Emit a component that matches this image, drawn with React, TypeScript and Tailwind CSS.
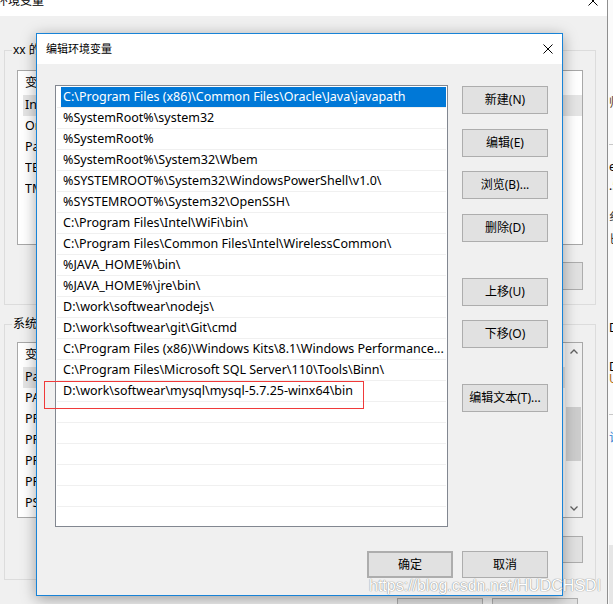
import React from "react";

const paths = [
  "C:\\Program Files (x86)\\Common Files\\Oracle\\Java\\javapath",
  "%SystemRoot%\\system32",
  "%SystemRoot%",
  "%SystemRoot%\\System32\\Wbem",
  "%SYSTEMROOT%\\System32\\WindowsPowerShell\\v1.0\\",
  "%SYSTEMROOT%\\System32\\OpenSSH\\",
  "C:\\Program Files\\Intel\\WiFi\\bin\\",
  "C:\\Program Files\\Common Files\\Intel\\WirelessCommon\\",
  "%JAVA_HOME%\\bin\\",
  "%JAVA_HOME%\\jre\\bin\\",
  "D:\\work\\softwear\\nodejs\\",
  "D:\\work\\softwear\\git\\Git\\cmd",
  "C:\\Program Files (x86)\\Windows Kits\\8.1\\Windows Performance...",
  "C:\\Program Files\\Microsoft SQL Server\\110\\Tools\\Binn\\",
  "D:\\work\\softwear\\mysql\\mysql-5.7.25-winx64\\bin",
  "",
  "",
  "",
  "",
  "",
  "",
];

const userVars = [
  ["IntelliJ IDEA", "C:\\Program Files\\JetBrains\\bin;"],
  ["OneDrive", "C:\\Users\\xx\\OneDrive"],
  ["Path", "C:\\Users\\xx\\AppData\\Local\\Microsoft\\WindowsApps;"],
  ["TEMP", "%USERPROFILE%\\AppData\\Local\\Temp"],
  ["TMP", "%USERPROFILE%\\AppData\\Local\\Temp"],
];

const sysVars = [
  ["Path", "C:\\Program Files (x86)\\Common Files\\Oracle\\Java\\javapath;"],
  ["PATHEXT", ".COM;.EXE;.BAT;.CMD;.VBS;.VBE;.JS;.JSE;.WSF;.WSH;.MSC"],
  ["PROCESSOR_ARCHITECTURE", "AMD64"],
  ["PROCESSOR_IDENTIFIER", "Intel64 Family 6 Model 142 Stepping 10"],
  ["PROCESSOR_LEVEL", "6"],
  ["PROCESSOR_REVISION", "8e0a"],
  ["PSModulePath", "%ProgramFiles%\\WindowsPowerShell\\Modules;"],
];

function CloseX({ className = "" }: { className?: string }) {
  return (
    <svg width="10" height="10" viewBox="0 0 10 10" className={className}>
      <path d="M0.5 0.5 L9.5 9.5 M9.5 0.5 L0.5 9.5" stroke="#000" strokeWidth="1" fill="none" />
    </svg>
  );
}

function Btn({ children, className = "" }: { children: React.ReactNode; className?: string }) {
  return (
    <div
      className={`w-[86px] shrink-0 bg-[#e1e1e1] border border-[#adadad] flex items-center justify-center text-[12px] text-black ${className}`}
    >
      {children}
    </div>
  );
}

function BgList({ rows, headerH, scroll }: { rows: string[][]; headerH: string; scroll?: boolean }) {
  return (
    <div className="flex bg-white border border-[#a8a8a8] h-full overflow-hidden">
      <div className="flex-1 flex flex-col text-[12.5px] text-black">
        <div className={`${headerH} flex items-center pl-[7px] shrink-0`}>
          <span className="w-[180px]">变量</span>
          <span>值</span>
        </div>
        {rows.map((r, i) => (
          <div key={i} className="h-[21px] shrink-0 flex items-center">
            <div className={`ml-[5px] h-full flex items-center pl-[2px] flex-1 ${i === 0 ? "bg-[#e5e5e5]" : ""}`}>
              <span className="w-[173px] whitespace-nowrap overflow-hidden">{r[0]}</span>
              <span className="whitespace-nowrap overflow-hidden">{r[1]}</span>
            </div>
          </div>
        ))}
      </div>
      {scroll && (
        <div className="w-[17px] shrink-0 bg-[#f0f0f0] flex flex-col">
          <div className="h-[17px] flex items-center justify-center">
            <svg width="8" height="5" viewBox="0 0 8 5">
              <path d="M0.5 4.5 L4 1 L7.5 4.5" stroke="#606060" strokeWidth="1.3" fill="none" />
            </svg>
          </div>
          <div className="flex-1 flex flex-col">
            <div className="mt-[47px] mx-[1px] h-[54px] bg-[#cdcdcd]" />
          </div>
          <div className="h-[17px] flex items-center justify-center">
            <svg width="8" height="5" viewBox="0 0 8 5">
              <path d="M0.5 0.5 L4 4 L7.5 0.5" stroke="#606060" strokeWidth="1.3" fill="none" />
            </svg>
          </div>
        </div>
      )}
    </div>
  );
}

export default function App() {
  return (
    <div className="w-[613px] h-[604px] overflow-hidden relative bg-[#f0f0f0] flex font-['Noto_Sans','Noto_Sans_CJK_SC',sans-serif]">
      {/* background window: 环境变量 */}
      <div className="w-[608px] shrink-0 flex flex-col border-r border-[#8f8f8f]">
        <div className="h-[30px] -mt-[14px] shrink-0 bg-white flex items-center justify-between">
          <span className="-ml-[4px] text-[12px] text-black">环境变量</span>
          <CloseX className="mr-[9px]" />
        </div>
        <div className="flex flex-col pl-[4px]">
          <fieldset className="mt-[26px] w-[592px] border border-[#dcdcdc] px-[12px] pb-[14px]">
            <legend className="-ml-[5px] px-[1px] text-[12px] leading-[16px] text-black">xx 的用户变量(U)</legend>
            <div className="mt-[12px] h-[175px]">
              <BgList rows={userVars} headerH="h-[24px]" />
            </div>
            <div className="mt-[17px] h-[28px] flex justify-end gap-[10px]">
              <Btn>新建(N)...</Btn>
              <Btn>编辑(E)...</Btn>
              <Btn>删除(D)</Btn>
            </div>
          </fieldset>
          <fieldset className="mt-[11px] w-[592px] border border-[#dcdcdc] px-[12px] pb-[16px]">
            <legend className="-ml-[5px] px-[1px] text-[12px] leading-[16px] text-black">系统变量(S)</legend>
            <div className="mt-[10px] h-[176px]">
              <BgList rows={sysVars} headerH="h-[24px]" scroll />
            </div>
            <div className="mt-[18px] h-[27px] flex justify-end gap-[10px]">
              <Btn>新建(W)...</Btn>
              <Btn>编辑(I)...</Btn>
              <Btn>删除(L)</Btn>
            </div>
          </fieldset>
          <div className="mt-[18px] h-[27px] flex justify-end gap-[9px] pr-[29px]">
            <Btn>确定</Btn>
            <Btn>取消</Btn>
          </div>
        </div>
      </div>

      {/* sliver of another window at far right */}
      <div className="flex-1 bg-[#fbfbfb] flex flex-col overflow-hidden text-[12px] leading-[14px] pl-[1px]">
        <span className="mt-[96px] text-[#5a3a1a] whitespace-nowrap">帅</span>
        <div className="mt-[34px] h-px bg-[#c8c8c8]" />
        <span className="mt-[15px] text-black">e</span>
        <span className="mt-[5px] text-black">.5</span>
        <span className="mt-[17px] text-[#333]">纟</span>
        <span className="mt-[9px] text-[#333]">匕</span>
        <span className="mt-[74px] text-black">D</span>
        <span className="mt-[25px] text-black">D</span>
        <span className="mt-[-2px] text-[#b06a10]">U</span>
        <div className="mt-[28px] h-px bg-[#c8c8c8]" />
        <span className="mt-[16px] text-[#2a7ad2]">许</span>
        <div className="mt-[100px] flex-1 bg-[#e6e6e6]" />
      </div>

      {/* foreground dialog: 编辑环境变量 */}
      <div className="absolute left-[36px] top-[33px] w-[527px] h-[563px] border border-[#1883d7] bg-[#f0f0f0] flex flex-col shadow-[0_3px_14px_rgba(0,0,0,0.35)]">
        <div className="h-[30px] shrink-0 bg-white flex items-center justify-between pl-[9px] pr-[9px]">
          <span className="text-[11px] text-black">编辑环境变量</span>
          <CloseX />
        </div>
        <div className="flex-1 flex flex-col pt-[21px] pl-[18px] pr-[14px] pb-[17px]">
          <div className="flex gap-[14px]">
            <div className="w-[393px] h-[442px] shrink-0 border border-[#828790] bg-white overflow-hidden pt-[1px] px-[1px] flex flex-col">
              {paths.map((p, i) => (
                <div key={i} className="h-[21px] shrink-0 border-b border-[#f0f0f0] flex">
                  <div
                    className={`ml-[4px] flex-1 flex items-center pl-[2px] text-[12.5px] whitespace-nowrap overflow-hidden ${
                      i === 0 ? "bg-[#0078d7] text-white" : "text-black"
                    }`}
                  >
                    {p}
                  </div>
                </div>
              ))}
            </div>
            <div className="flex flex-col pt-[1px]">
              <Btn className="h-[28px]">新建(N)</Btn>
              <Btn className="h-[28px] mt-[15px]">编辑(E)</Btn>
              <Btn className="h-[28px] mt-[14px]">浏览(B)...</Btn>
              <Btn className="h-[28px] mt-[15px]">删除(D)</Btn>
              <Btn className="h-[28px] mt-[36px]">上移(U)</Btn>
              <Btn className="h-[28px] mt-[14px]">下移(O)</Btn>
              <Btn className="h-[28px] mt-[36px]">编辑文本(T)...</Btn>
            </div>
          </div>
          <div className="mt-[24px] flex justify-end gap-[9px]">
            <Btn className="h-[27px] border-2 border-[#0078d7]">确定</Btn>
            <Btn className="h-[27px]">取消</Btn>
          </div>
        </div>
        {/* red annotation box */}
        <div className="absolute left-[7px] top-[347px] w-[320px] h-[28px] border border-[#f03a3a]" />
      </div>

      {/* watermark */}
      <div className="absolute left-[369px] top-[574px] text-[16px] text-white font-['Liberation_Sans',sans-serif] [text-shadow:0_0_1px_#8a8a8a,0_0_1px_#8a8a8a] whitespace-nowrap">
        https://blog.csdn.net/HUDCHSDI
      </div>
    </div>
  );
}
